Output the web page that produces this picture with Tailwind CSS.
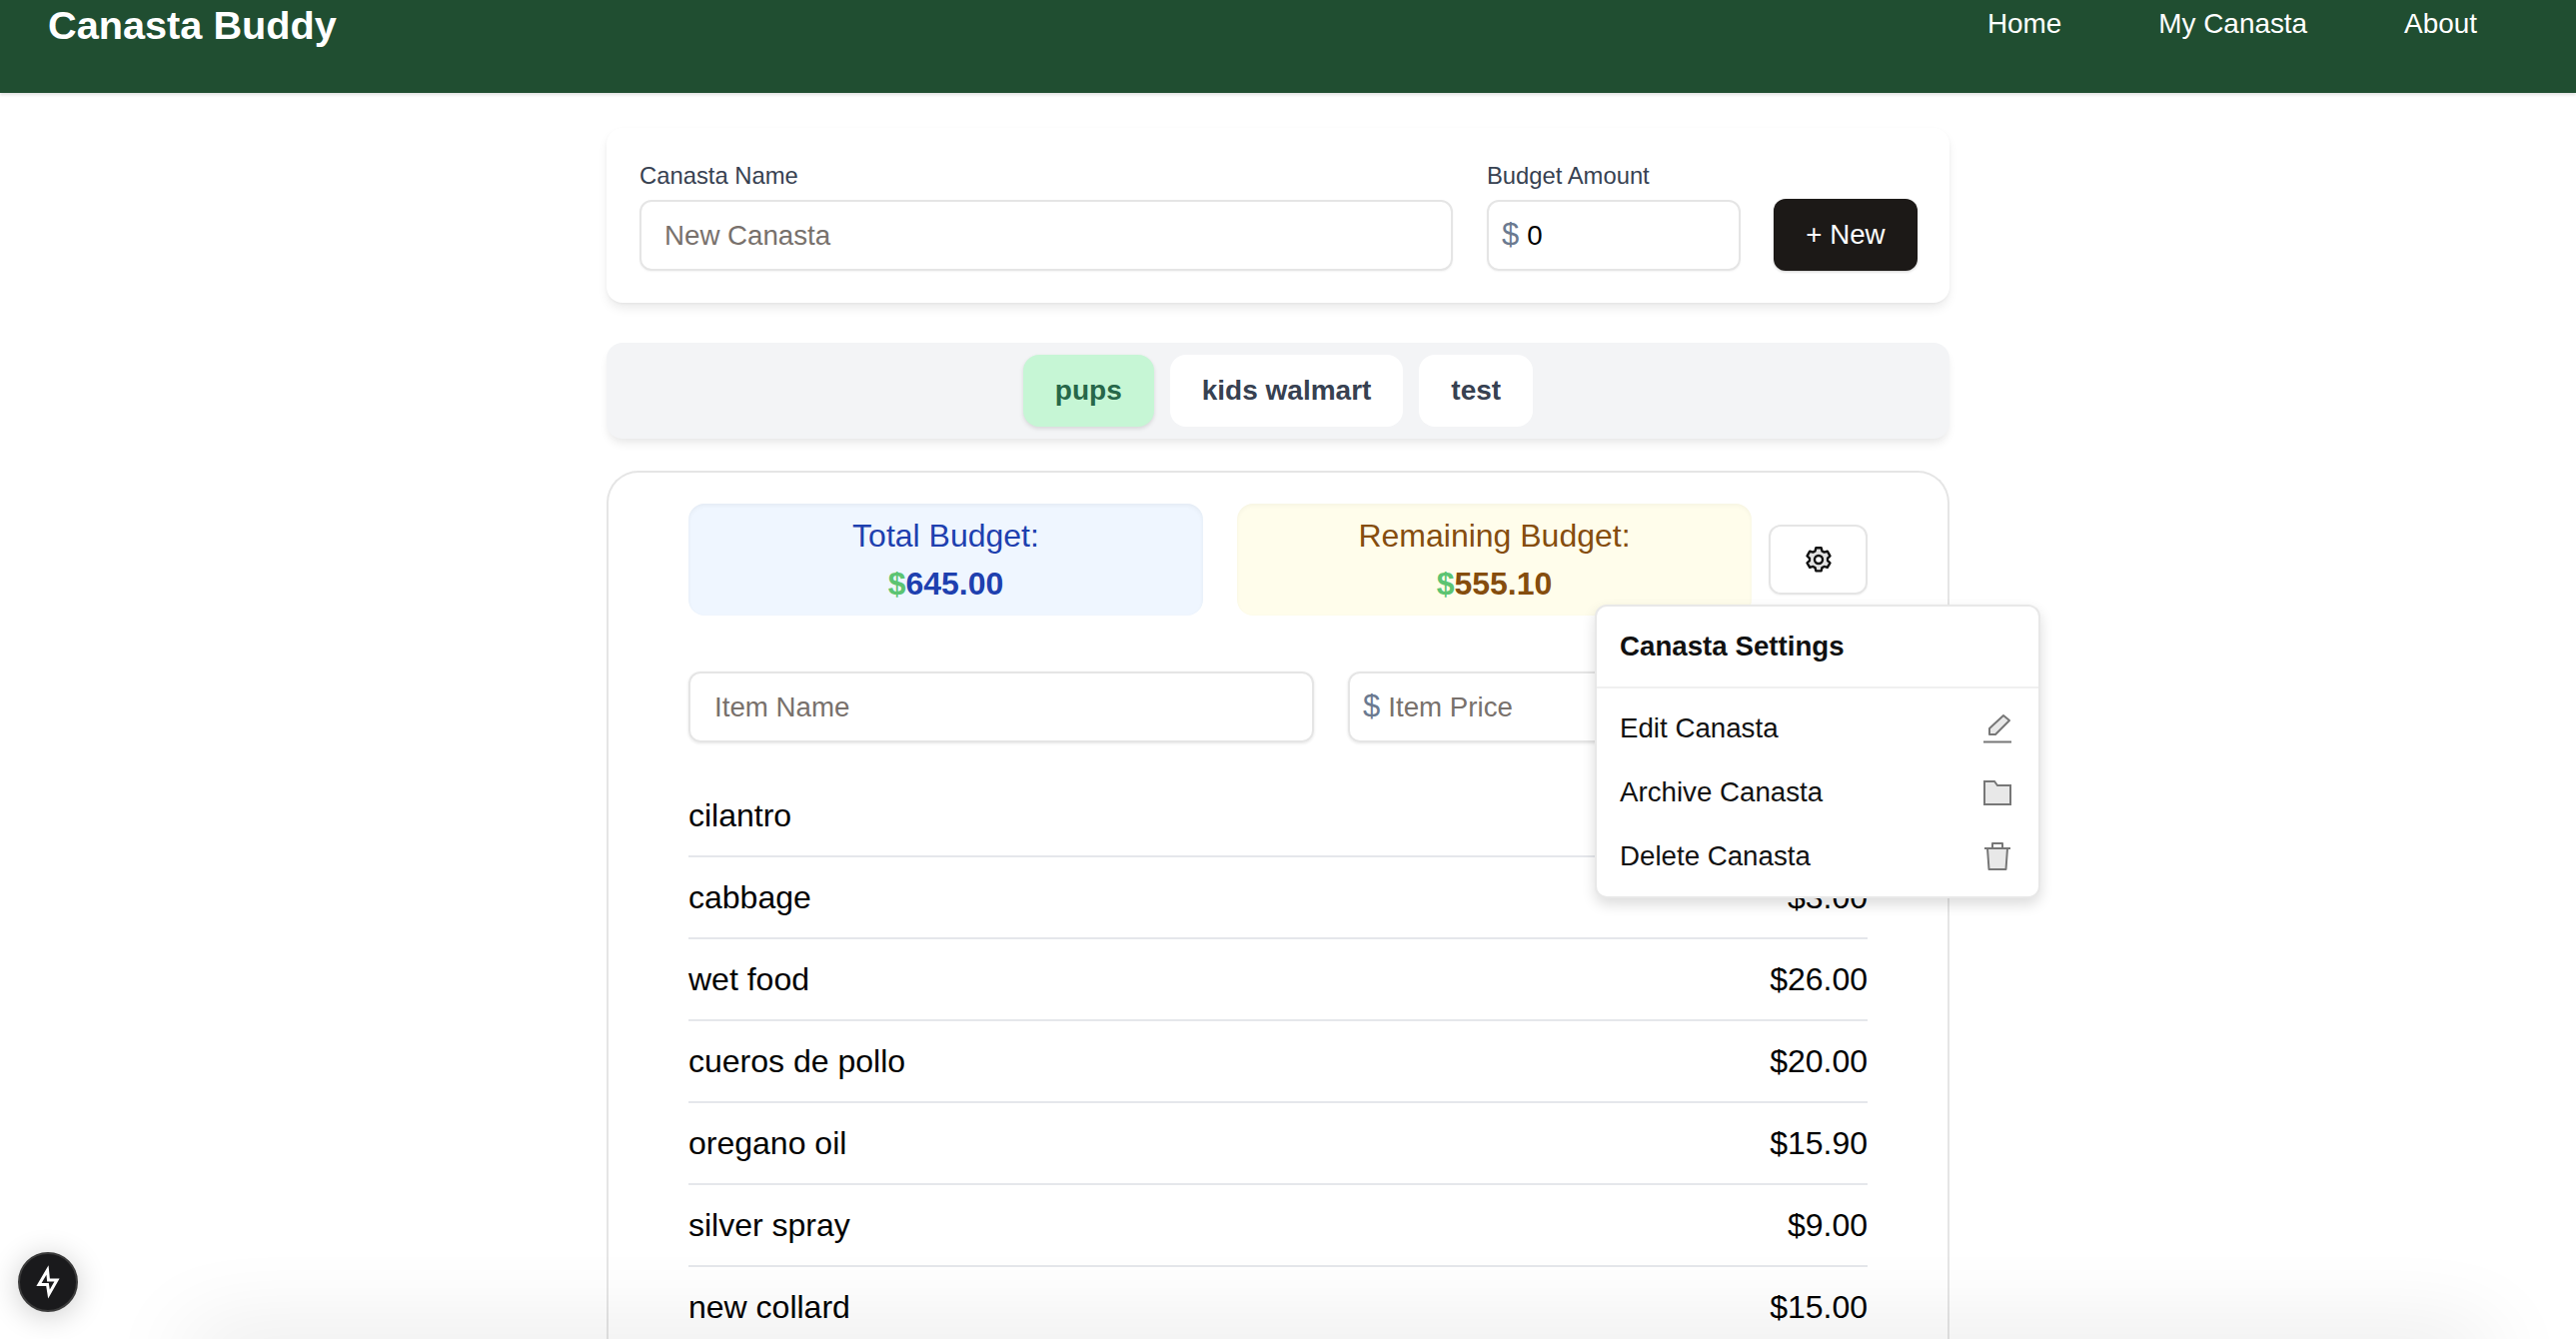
<!DOCTYPE html>
<html lang="en">

<head>
  <meta charset="UTF-8" />
  <meta name="viewport" content="width=device-width, initial-scale=1.0" />
  <title>Canasta Buddy</title>
  <script src="https://cdn.jsdelivr.net/npm/@tailwindcss/browser@4"></script>
</head>

<body class="h-screen overflow-hidden bg-white font-['Liberation_Sans',Arial,sans-serif] text-[27.7px] text-black">
  <!-- Header -->
  <header class="flex h-[93px] items-start justify-between bg-[#204e31] pl-[48px] pr-[99px] text-white shadow-[0_2px_3px_rgba(0,0,0,0.12)]">
    <a class="mt-[1px] text-[39.7px] leading-[48px] font-bold">Canasta Buddy</a>
    <nav class="flex gap-[97px] pt-[6px] text-[27.9px] leading-[36px]">
      <a>Home</a>
      <a>My Canasta</a>
      <a>About</a>
    </nav>
  </header>

  <main class="ml-[607px] w-[1344px] pt-[35px]">
    <!-- New canasta form -->
    <div class="flex items-end gap-[34px] rounded-[16px] bg-white pt-[32px] pr-[32px] pb-[32px] pl-[33px] shadow-[0_6px_12px_-2px_rgba(0,0,0,0.1),0_1px_3px_rgba(0,0,0,0.04)]">
      <div class="w-[814px]">
        <label class="mb-[8px] block text-[23.8px] leading-[32px] text-[#374151]">Canasta Name</label>
        <input placeholder="New Canasta" class="h-[71px] w-full rounded-[12px] border-2 border-[#e5e5e5] pl-[23px] shadow-[0_1px_2px_rgba(0,0,0,0.05)] placeholder:text-[#78716c]" />
      </div>
      <div class="w-[254px]">
        <label class="mb-[8px] block text-[23.8px] leading-[32px] text-[#374151]">Budget Amount</label>
        <div class="flex h-[71px] items-center gap-[8px] rounded-[12px] border-2 border-[#e5e5e5] pl-[13px] shadow-[0_1px_2px_rgba(0,0,0,0.05)]">
          <span class="text-[31px] text-[#6b7a90]">$</span>
          <span>0</span>
        </div>
      </div>
      <button class="ml-[-1px] h-[72px] w-[144px] rounded-[12px] bg-[#1c1917] text-white shadow-[0_1px_3px_rgba(0,0,0,0.2)]">+ New</button>
    </div>

    <!-- Canasta tabs -->
    <div class="mt-[40px] flex justify-center gap-[16px] rounded-[16px] bg-[#f3f4f6] p-[12px] text-[28px] font-bold text-[#374151] shadow-[0_6px_10px_-2px_rgba(0,0,0,0.1)]">
      <button class="h-[72px] rounded-[16px] bg-[#c6f6d5] px-[32px] text-[#276749] shadow-[0_2px_4px_rgba(0,0,0,0.12)]">pups</button>
      <button class="h-[72px] rounded-[16px] bg-white px-[32px]">kids walmart</button>
      <button class="h-[72px] rounded-[16px] bg-white px-[32px]">test</button>
    </div>

    <!-- Active canasta -->
    <div class="relative mt-[32px] rounded-t-[32px] border-2 border-b-0 border-[#e5e5e5] pt-[31px] pr-[80px] pl-[80px]">
      <div class="flex items-center gap-[34px]">
        <div class="h-[112px] w-[515px] rounded-[16px] bg-[#eff6ff] pt-[8px] text-center text-[32px] leading-[48px] text-[#1e40af] shadow-[inset_0_2px_4px_rgba(0,0,0,0.05)]">
          <p>Total Budget:</p>
          <p class="font-bold"><span class="text-[#5cc472]">$</span>645.00</p>
        </div>
        <div class="h-[112px] w-[515px] rounded-[16px] bg-[#fffdeb] pt-[8px] text-center text-[32px] leading-[48px] text-[#854d0e] shadow-[inset_0_2px_4px_rgba(0,0,0,0.04)]">
          <p>Remaining Budget:</p>
          <p class="font-bold"><span class="text-[#5cc472]">$</span>555.10</p>
        </div>
        <button class="ml-[-17px] flex h-[70px] w-[99px] items-center justify-center rounded-[12px] border-2 border-[#e5e5e5] shadow-[0_1px_2px_rgba(0,0,0,0.05)]">
          <svg class="h-[32px] w-[32px]" viewBox="0 0 24 24" fill="#e2e2e2" stroke="#111" stroke-width="1.8" stroke-linejoin="round">
            <path d="M10 3.200h4l.6 2.400 1.600.9 2.400-.7 2 3.400-1.800 1.700v1.900l1.800 1.700-2 3.400-2.400-.7-1.600.9-.6 2.400h-4l-.6-2.400-1.600-.9-2.400.7-2-3.400 1.800-1.700v-1.900L3.400 9.200l2-3.400 2.400.7 1.600-.9z" />
            <circle cx="12" cy="12" r="3" fill="#fff" />
          </svg>
        </button>
      </div>

      <!-- Add item -->
      <div class="mt-[56px] flex gap-[34px]">
        <input placeholder="Item Name" class="h-[71px] w-[626px] rounded-[12px] border-2 border-[#e5e5e5] pl-[24px] shadow-[0_1px_3px_rgba(0,0,0,0.1)] placeholder:text-[#78716c]" />
        <div class="flex h-[71px] w-[300px] items-center gap-[8px] rounded-[12px] border-2 border-[#e5e5e5] pl-[13px] shadow-[0_1px_3px_rgba(0,0,0,0.1)]">
          <span class="text-[31px] text-[#6b7a90]">$</span>
          <span class="text-[#78716c]">Item Price</span>
        </div>
      </div>

      <!-- Items -->
      <ul class="mt-[33px] text-[32px]">
        <li class="flex h-[82px] items-center justify-between border-b-2 border-[#e5e7eb]"><span>cilantro</span><span>$1.00</span></li>
        <li class="flex h-[82px] items-center justify-between border-b-2 border-[#e5e7eb]"><span>cabbage</span><span>$3.00</span></li>
        <li class="flex h-[82px] items-center justify-between border-b-2 border-[#e5e7eb]"><span>wet food</span><span>$26.00</span></li>
        <li class="flex h-[82px] items-center justify-between border-b-2 border-[#e5e7eb]"><span>cueros de pollo</span><span>$20.00</span></li>
        <li class="flex h-[82px] items-center justify-between border-b-2 border-[#e5e7eb]"><span>oregano oil</span><span>$15.90</span></li>
        <li class="flex h-[82px] items-center justify-between border-b-2 border-[#e5e7eb]"><span>silver spray</span><span>$9.00</span></li>
        <li class="flex h-[82px] items-center justify-between border-b-2 border-[#e5e7eb]"><span>new collard</span><span>$15.00</span></li>
      </ul>

      <!-- Settings menu -->
      <div class="absolute top-[132px] left-[987px] w-[446px] rounded-[12px] border-2 border-[#e8e8e8] bg-white text-[#111] shadow-[0_6px_14px_rgba(0,0,0,0.14)]">
        <div class="flex h-[82px] items-center border-b-2 border-[#f0f0f0] pl-[23px] font-bold">Canasta Settings</div>
        <div class="py-[8px]">
          <div class="flex h-[64px] items-center justify-between pr-[26px] pl-[23px]">
            <span>Edit Canasta</span>
            <svg class="h-[30px] w-[30px]" viewBox="0 0 30 30" fill="#e8e8e8" stroke="#777" stroke-width="2" stroke-linejoin="round">
              <path d="M21 2l6 5L13 21H7v-6z" />
              <path d="M1 28.500h28" fill="none" />
            </svg>
          </div>
          <div class="flex h-[64px] items-center justify-between pr-[26px] pl-[23px]">
            <span>Archive Canasta</span>
            <svg class="h-[30px] w-[30px]" viewBox="0 0 30 30" fill="#e8e8e8" stroke="#777" stroke-width="2">
              <path d="M2 4h10l3 4h13v19H2z" />
            </svg>
          </div>
          <div class="flex h-[64px] items-center justify-between pr-[26px] pl-[23px]">
            <span>Delete Canasta</span>
            <svg class="h-[30px] w-[30px]" viewBox="0 0 30 30" fill="#e8e8e8" stroke="#777" stroke-width="2" stroke-linejoin="round">
              <path d="M5 7h20l-1.500 21h-17z" />
              <path d="M2 7h26M10 7V2h10v5" fill="none" />
            </svg>
          </div>
        </div>
      </div>
    </div>
  </main>

  <!-- Shadow rising from just under the window, and the dev badge -->
  <div class="pointer-events-none fixed top-full right-[88px] left-[190px] h-[40px] shadow-[0_0_90px_rgba(0,0,0,0.14)]"></div>
  <button class="fixed bottom-[27px] left-[18px] flex h-[60px] w-[60px] items-center justify-center rounded-full border-2 border-[#3c3c3c] bg-[#1a1a1c] shadow-[0_4px_30px_rgba(0,0,0,0.2)]">
    <svg class="h-[56px] w-[56px]" viewBox="2 2 56 56" fill="none" stroke="#fff" stroke-width="3" stroke-linejoin="miter">
      <path d="M29.500 18L30.500 28H39L31 42L29.500 32.500H21z" />
    </svg>
  </button>
</body>
</html>
